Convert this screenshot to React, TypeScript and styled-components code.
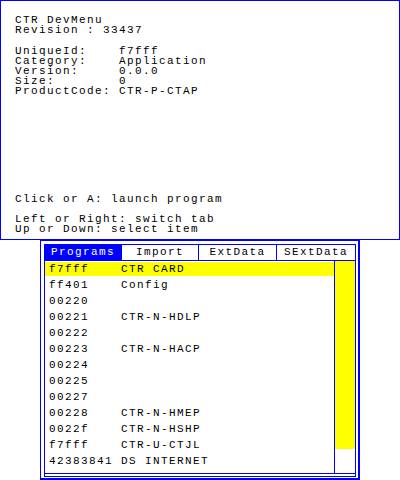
import React from "react";
import styled, { createGlobalStyle } from "styled-components";

const BLUE = "#0000ff";
const YELLOW = "#ffff00";

const GlobalStyle = createGlobalStyle`
  html, body { margin: 0; padding: 0; background: #ffffff; }
  body {
    font-family: "Liberation Mono", "DejaVu Sans Mono", monospace;
    font-size: 11px;
    color: #000000;
    -webkit-font-smoothing: none;
  }
`;

const Page = styled.div`
  width: 400px;
  height: 480px;
  overflow: hidden;
`;

const TopScreen = styled.div`
  box-sizing: border-box;
  width: 400px;
  height: 240px;
  border: 1px solid ${BLUE};
  padding: 14px 14px 5px 14px;
  display: flex;
  flex-direction: column;
  letter-spacing: 1.4px;
`;

const TextBlock = styled.div<{ $gap?: number }>`
  margin-top: ${(p) => p.$gap ?? 0}px;
`;

const Line = styled.div`
  height: 10px;
  line-height: 10px;
  white-space: pre;
`;

const Spacer = styled.div`
  flex: 1;
`;

const BottomScreen = styled.div`
  box-sizing: border-box;
  margin-left: 40px;
  width: 320px;
  height: 240px;
  border-style: solid;
  border-color: ${BLUE};
  border-width: 1px 2px 2px 1px;
  padding: 3px 2px 1px 3px;
`;

const Frame = styled.div`
  box-sizing: border-box;
  height: 100%;
  border: 1px solid ${BLUE};
  display: flex;
  flex-direction: column;
`;

const TabBar = styled.div`
  display: grid;
  grid-template-columns: 76px 77px 78px 1fr;
  height: 15px;
  border-bottom: 1px solid ${BLUE};
`;

const Tab = styled.div<{ $active?: boolean; $first?: boolean }>`
  border-left: ${(p) => (p.$first ? "none" : `1px solid ${BLUE}`)};
  background: ${(p) => (p.$active ? BLUE : "#ffffff")};
  color: ${(p) => (p.$active ? "#ffffff" : "#000000")};
  text-align: center;
  line-height: 15px;
  letter-spacing: 1.4px;
  white-space: pre;
`;

const ListArea = styled.div`
  display: flex;
  height: 212px;
  border-bottom: 1px solid ${BLUE};
`;

const Rows = styled.div`
  flex: 1;
  display: flex;
  flex-direction: column;
`;

const Row = styled.div<{ $selected?: boolean }>`
  display: flex;
  height: 14px;
  margin: 1px 0;
  padding-left: 4px;
  line-height: 14px;
  letter-spacing: 1.4px;
  white-space: pre;
  background: ${(p) => (p.$selected ? YELLOW : "transparent")};
`;

const IdCell = styled.span`
  width: 72px;
  flex: none;
`;

const ScrollTrack = styled.div`
  width: 20px;
  border-left: 1px solid ${BLUE};
  display: flex;
  flex-direction: column;
`;

const Thumb = styled.div<{ $h: number }>`
  height: ${(p) => p.$h}px;
  background: ${YELLOW};
`;

const tabs = ["Programs", "Import", "ExtData", "SExtData"];

const items: [string, string][] = [
  ["f7fff", "CTR CARD"],
  ["ff401", "Config"],
  ["00220", ""],
  ["00221", "CTR-N-HDLP"],
  ["00222", ""],
  ["00223", "CTR-N-HACP"],
  ["00224", ""],
  ["00225", ""],
  ["00227", ""],
  ["00228", "CTR-N-HMEP"],
  ["0022f", "CTR-N-HSHP"],
  ["f7fff", "CTR-U-CTJL"],
  ["42383841", "DS INTERNET"],
];

export default function App() {
  return (
    <Page>
      <GlobalStyle />
      <TopScreen>
        <TextBlock>
          <Line>CTR DevMenu</Line>
          <Line>Revision : 33437</Line>
        </TextBlock>
        <TextBlock $gap={11}>
          <Line>UniqueId:    f7fff</Line>
          <Line>Category:    Application</Line>
          <Line>Version:     0.0.0</Line>
          <Line>Size:        0</Line>
          <Line>ProductCode: CTR-P-CTAP</Line>
        </TextBlock>
        <Spacer />
        <TextBlock>
          <Line>Click or A: launch program</Line>
          <Line> </Line>
          <Line>Left or Right: switch tab</Line>
          <Line>Up or Down: select item</Line>
        </TextBlock>
      </TopScreen>
      <BottomScreen>
        <Frame>
          <TabBar>
            {tabs.map((t, i) => (
              <Tab key={t} $active={i === 0} $first={i === 0}>
                {t}
              </Tab>
            ))}
          </TabBar>
          <ListArea>
            <Rows>
              {items.map(([id, name], i) => (
                <Row key={i} $selected={i === 0}>
                  <IdCell>{id}</IdCell>
                  <span>{name}</span>
                </Row>
              ))}
            </Rows>
            <ScrollTrack>
              <Thumb $h={188} />
            </ScrollTrack>
          </ListArea>
        </Frame>
      </BottomScreen>
    </Page>
  );
}
